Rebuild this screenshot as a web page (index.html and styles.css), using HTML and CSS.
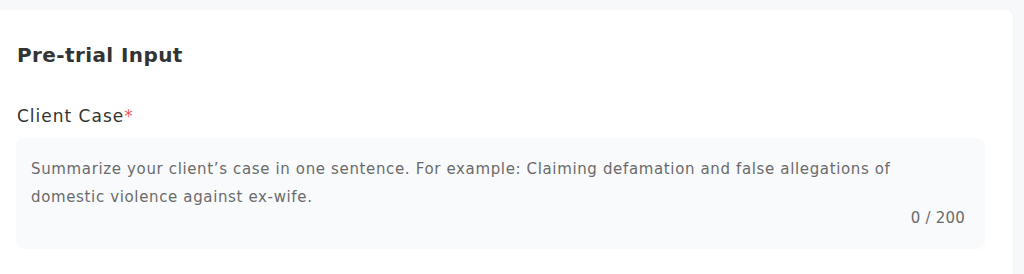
FILE: index.html
```html
<!DOCTYPE html>
<html lang="en">
<head>
<meta charset="utf-8">
<title>Pre-trial Input</title>
<link rel="stylesheet" href="styles.css">
</head>
<body>
<main class="page">
  <section class="card">
    <h2 class="card-title">Pre-trial Input</h2>
    <div class="field">
      <label class="field-label" for="client-case">Client Case<span class="required">*</span></label>
      <div class="input-box">
        <textarea id="client-case" class="input-area" rows="2" placeholder="Summarize your client’s case in one sentence. For example: Claiming defamation and false allegations of domestic violence against ex-wife."></textarea>
        <div class="counter">0 / 200</div>
      </div>
    </div>
  </section>
</main>
</body>
</html>
```
FILE: styles.css
```css
html, body {
  margin: 0;
  padding: 0;
  height: 100%;
}
body {
  background: #f7f8fa;
  font-family: "DejaVu Sans", "Open Sans", sans-serif;
  overflow: hidden;
}
.page {
  padding: 10px 10px 0 0;
  height: 100%;
  box-sizing: border-box;
}
.card {
  background: #ffffff;
  border-top-right-radius: 8px;
  height: 100%;
  box-sizing: border-box;
  padding: 30px 28px 0 16px;
  border-right: 1px solid #f1f2f5;
}
.card-title {
  margin: 0 0 0 1px;
  font-size: 20px;
  line-height: 30px;
  font-weight: 600;
  letter-spacing: 0.4px;
  color: #333333;
}
.field {
  margin-top: 34px;
  display: flex;
  flex-direction: column;
  gap: 10px;
}
.field-label {
  margin-left: 1px;
  font-size: 17px;
  line-height: 24px;
  font-weight: 400;
  letter-spacing: 1px;
  color: #333333;
}
.required {
  color: #f25a5a;
}
.input-box {
  background: #f9fafc;
  border-radius: 8px;
  padding: 17px 20px 22px 15px;
  display: flex;
  flex-direction: column;
}
.input-area {
  border: none;
  background: transparent;
  resize: none;
  outline: none;
  padding: 0 20px 0 0;
  margin: 0;
  font-family: inherit;
  font-size: 15px;
  line-height: 28px;
  letter-spacing: 0.64px;
  color: #333;
  height: 56px;
  overflow: hidden;
}
.input-area::placeholder {
  color: #6b6b6b;
  opacity: 1;
}
.counter {
  align-self: flex-end;
  margin-top: -2px;
  font-size: 15px;
  line-height: 18px;
  letter-spacing: 0.2px;
  color: #6b6b6b;
}
```
